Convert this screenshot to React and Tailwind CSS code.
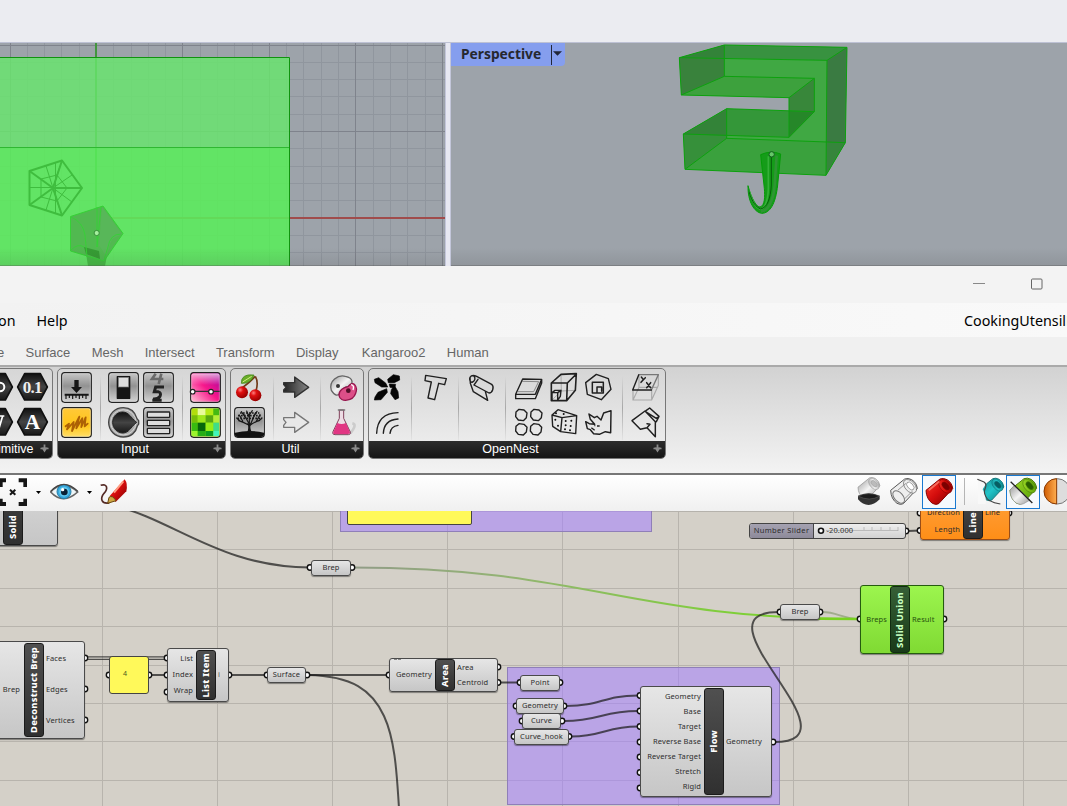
import React from "react";

const MINOR_X = [27, 44, 61, 79, 113, 131, 148, 165, 200, 217, 234, 252, 286, 303, 321, 338, 373, 390, 407, 425];
const MAJOR_X = [10, 182, 269, 355, 442];
const MINOR_Y = [62, 79, 96, 114, 148, 166, 183, 200, 235, 252];
const MAJOR_Y = [45, 131];

function TopViewport() {
  return (
    <svg className="block h-[223px] w-[445px]" viewBox="0 43 445 223">
      <defs>
        <linearGradient id="shade" x1="0" y1="0" x2="0" y2="1">
          <stop offset="0" stopColor="#222" stopOpacity="0" />
          <stop offset="1" stopColor="#333" stopOpacity="0.12" />
        </linearGradient>
      </defs>
      <rect x="0" y="43" width="445" height="223" fill="#9da3aa" />
      {MINOR_X.map((x) => <rect key={x} x={x} y="43" width="1" height="223" fill="#90969e" />)}
      {MINOR_Y.map((y) => <rect key={y} x="0" y={y} width="445" height="1" fill="#90969e" />)}
      {MAJOR_X.map((x) => <rect key={x} x={x} y="43" width="1" height="223" fill="#7f838c" />)}
      {MAJOR_Y.map((y) => <rect key={y} x="0" y={y} width="445" height="1" fill="#7f838c" />)}
      <rect x="95" y="43" width="2" height="223" fill="#43953f" />
      <rect x="96" y="217" width="349" height="2" fill="#a04c4c" />
      <rect x="0" y="57" width="289" height="90" fill="#68e66c" fillOpacity="0.82" />
      <rect x="0" y="147" width="289" height="119" fill="#5aee5b" fillOpacity="0.87" />
      <rect x="0" y="147" width="289" height="1" fill="#2fb832" />
      <path d="M0 57.5H289.5V266" fill="none" stroke="#10930f" />
      <g fill="none" stroke="#3fbd3e" strokeWidth="1.5" strokeLinejoin="round">
        <path d="M29.5 171L62 160.5L82 188L62 215.5L29.5 205Z" strokeWidth="2" />
        <path d="M29.5 171L53 188L62 160.5M53 188H82M53 188L62 215.5M53 188L29.5 205" strokeWidth="2" />
        <path d="M30 187.500H53M46 166L60 210M46 210L60 166M41 179V197L57 201L67 188L57 175ZM53 188L72 175M53 188L72 202M55.500 163V213" strokeWidth="1" />
      </g>
      <path d="M85 247L88 266H105L108 250Z" fill="#46bb45" />
      <path d="M70.500 216.500L103 206L123 233.500L104 261L70.500 251Z" fill="#51b950" stroke="#36d136" />
      <path d="M102 207L99 245L106 256L112 239L122 234Z" fill="#65b567" fillOpacity="0.4" />
      <path d="M84 247L99 251L100 259L86 254Z" fill="#369d34" />
      <path d="M71 217Q83 222 85 235L87 257M71 250Q78 243 84 247M97 207V247M101 207L97 247M121 234Q110 234 108 247L104 260" fill="none" stroke="#36d136" strokeWidth="0.9" />
      <circle cx="96.700" cy="233" r="2.600" fill="#a5ef9e" stroke="#398f3b" />
      <rect x="0" y="248" width="445" height="18" fill="url(#shade)" />
      <rect x="0" y="265" width="445" height="1" fill="#555" fillOpacity="0.35" />
    </svg>
  );
}

function PerspectiveScene() {
  return (
    <svg className="block h-[223px] w-[616px]" viewBox="451 43 616 223">
      <rect x="451" y="43" width="616" height="223" fill="#9da3aa" />
      <g transform="translate(660 35) scale(0.33333)" strokeLinejoin="round">
        <path d="M58 68L193 30L561 37L556 323L498 421L75 403L70 297L200 221L463 230L387 307L387 188L64 180Z" fill="#40a843" />
        <path d="M387 188L463 130V230L387 307Z" fill="#379638" />
        <path d="M463 130V230L387 228L387 188Z" fill="#38873a" />
        <path d="M193 124L463 130L387 188L64 180Z" fill="#3da13d" />
        <path d="M58 68L193 30V124L64 180Z" fill="#39823c" />
        <path d="M193 30L561 37L501 76L193 70Z" fill="#389240" />
        <path d="M58 68L193 30V70Z" fill="#338339" />
        <path d="M501 76L561 37L556 323L498 421Z" fill="#3a7b42" />
        <path d="M200 221L463 230L387 307L200 302Z" fill="#349739" />
        <path d="M200 221V310L75 403L70 297Z" fill="#36903a" />
        <path d="M200 221V302L70 297Z" fill="#338338" />
        <path d="M200 310L556 323L498 421L75 403Z" fill="#329734" fillOpacity="0.4" />
        <path d="M387 307L463 230L387 228Z" fill="#268729" />
        <path d="M58 68L193 30L561 37L556 323L498 421L75 403L70 297L200 221L463 230M387 188L64 180L58 68L501 76L561 37M501 76L498 421M193 30V124L463 130V230L387 307L387 188L463 130M193 124L64 180M70 297L387 307M200 221V310L75 403M200 310L556 323" fill="none" stroke="#0da10e" strokeWidth="3" />
        <path d="M302 359Q333 345 362 357L353 450C347 508 329 535 305 535C283 532 263 500 264 452C275 495 292 517 300 516C315 512 315 484 313 460Z" fill="#159c19" stroke="#059b08" strokeWidth="3" />
        <path d="M325 364V460C324 499 313 524 300 523C288 519 277 499 268 470" fill="none" stroke="#35b039" strokeWidth="5" />
        <path d="M334 361V450C332 492 321 518 302 522C289 517 277 503 267 470" fill="none" stroke="#075c0b" strokeWidth="3" />
        <path d="M350 362L344 450C341 494 325 528 303 529" fill="none" stroke="#2f9534" strokeWidth="8" />
        <circle cx="335" cy="358" r="8" fill="#66c769" stroke="#155f20" strokeWidth="3" />
      </g>
      <rect x="451" y="248" width="616" height="18" fill="url(#shade)" />
      <rect x="451" y="265" width="616" height="1" fill="#555" fillOpacity="0.35" />
    </svg>
  );
}

/* Icons are drawn on a 93-unit tile shown at 31px. */
function Icon({ at, children }) {
  return (
    <svg className="block size-[31px] shrink-0 overflow-visible" viewBox={`${at} 93 93`}>
      {children}
    </svg>
  );
}

function Tile({ x, y, fill = "url(#steel)" }) {
  return (
    <>
      <rect x={x + 2} y={y + 2} width="89" height="89" rx="9" fill={fill} stroke="#222" strokeWidth="3.500" />
      <rect x={x + 5} y={y + 5} width="83" height="83" rx="6" fill="none" stroke="#fff" strokeOpacity="0.55" strokeWidth="2" />
    </>
  );
}

function Gradients() {
  return (
    <svg className="absolute size-0">
      <defs>
        <linearGradient id="steel" x1="0" y1="0" x2="0" y2="1">
          <stop offset="0" stopColor="#c8c8c8" /><stop offset="0.45" stopColor="#929292" /><stop offset="1" stopColor="#d4d4d4" />
        </linearGradient>
        <linearGradient id="hex" x1="0" y1="0" x2="0" y2="1">
          <stop offset="0" stopColor="#111" /><stop offset="0.5" stopColor="#444" /><stop offset="1" stopColor="#181818" />
        </linearGradient>
        <linearGradient id="dark" x1="0" y1="0" x2="1" y2="0">
          <stop offset="0" stopColor="#222" /><stop offset="1" stopColor="#888" />
        </linearGradient>
        <linearGradient id="pink" x1="0" y1="1" x2="1" y2="0">
          <stop offset="0" stopColor="#ffc9d8" /><stop offset="0.5" stopColor="#f7188b" /><stop offset="1" stopColor="#a000a0" />
        </linearGradient>
        <linearGradient id="gloss" x1="0" y1="0" x2="0" y2="1">
          <stop offset="0" stopColor="#fff" stopOpacity="0.65" /><stop offset="1" stopColor="#fff" stopOpacity="0" />
        </linearGradient>
        <linearGradient id="amber" x1="0" y1="0" x2="0" y2="1">
          <stop offset="0" stopColor="#ffc83a" /><stop offset="0.6" stopColor="#ffc518" /><stop offset="1" stopColor="#ffdf6b" />
        </linearGradient>
        <linearGradient id="red" x1="0" y1="0" x2="1" y2="1">
          <stop offset="0" stopColor="#ff3b2a" /><stop offset="0.5" stopColor="#d30c0c" /><stop offset="1" stopColor="#7a0000" />
        </linearGradient>
        <linearGradient id="teal" x1="0" y1="0" x2="1" y2="1">
          <stop offset="0" stopColor="#1a8d92" /><stop offset="0.5" stopColor="#22c4c8" /><stop offset="1" stopColor="#087a80" />
        </linearGradient>
        <linearGradient id="lime" x1="0" y1="0" x2="1" y2="1">
          <stop offset="0" stopColor="#a6df2a" /><stop offset="1" stopColor="#4c9700" />
        </linearGradient>
        <linearGradient id="silver" x1="0" y1="0" x2="1" y2="1">
          <stop offset="0" stopColor="#999" /><stop offset="0.5" stopColor="#f4f4f4" /><stop offset="1" stopColor="#999" />
        </linearGradient>
        <linearGradient id="ball" x1="0" y1="0" x2="1" y2="0">
          <stop offset="0" stopColor="#cf5b00" /><stop offset="1" stopColor="#ffae50" />
        </linearGradient>
        <radialGradient id="cherry" cx="0.35" cy="0.3" r="0.7">
          <stop offset="0" stopColor="#ff8080" /><stop offset="0.35" stopColor="#e01010" /><stop offset="1" stopColor="#900" />
        </radialGradient>
      </defs>
    </svg>
  );
}

function Column({ children }) {
  return <div className="flex shrink-0 flex-col gap-1">{children}</div>;
}

function Divider() {
  return <div className="ml-2 mr-[7px] mt-1 h-[64px] w-px shrink-0 bg-gradient-to-b from-[#d8d8d8] via-[#a8a8a8] to-[#e4e4e4]" />;
}

function Panel({ title, className, titleClass = "", children }) {
  return (
    <section className={`flex h-[91px] shrink-0 flex-col overflow-hidden rounded-[5px] border border-[#777] bg-gradient-to-b from-[#d6d6d6] to-[#f0f0f0] ${className}`}>
      <div className="flex h-[72px] justify-end pl-[3px] pr-[4px] pt-[3px]">{children}</div>
      <div className="relative h-[17px] bg-gradient-to-b from-[#2d2d2d] to-[#151515] text-center text-[12.500px] leading-[17px] text-white">
        <span className={titleClass}>{title}</span>
        <svg className="absolute right-[3px] top-[3px] size-[9px]" viewBox="0 0 10 10">
          <path d="M4 0.500H6V4H8.500L5 9.500L1.500 4H4Z" fill="#8a8a8a" />
          <path d="M0.500 5H9.500" stroke="#8a8a8a" strokeWidth="1.700" />
        </svg>
      </div>
    </section>
  );
}

function Hex({ x, y }) {
  return (
    <path d={`M${x + 23} ${y + 5}H${x + 70}L${x + 91} ${y + 45}L${x + 70} ${y + 84}H${x + 23}L${x + 2} ${y + 45}Z`} fill="url(#hex)" stroke="#111" strokeWidth="5" strokeLinejoin="round" />
  );
}

const GREENS = [
  ["#b2dc0c", "#e8fa9b", "#b5ea15", "#45b912"],
  ["#77bd07", "#9de71b", "#58a612", "#b5ed39"],
  ["#38bb0f", "#07660b", "#98ee16", "#3fdd88"],
  ["#9bf42c", "#25ad16", "#0a9f20", "#42f6ba"],
];

function InputPanel() {
  return (
    <Panel title="Input" titleClass="mr-[13px]" className="ml-1 w-[169px]">
      <Column>
        <Icon at="183 21">
          <Tile x={183} y={21} />
          <path d="M223 45H236V66H246L229.500 84L213 66H223Z" fill="#151515" />
          <path d="M194 89H266" stroke="#151515" strokeWidth="6" />
          <path d="M198 90V102M208 90V99M218 90V102M228 90V99M238 90V102M248 90V99M258 90V102" stroke="#151515" strokeWidth="3.500" />
        </Icon>
        <Icon at="183 126">
          <Tile x={183} y={126} fill="url(#amber)" />
          <path d="M197 184L207 176L201 193L221 171L216 198L238 155L229 190L247 160L244 186L257 157L254 184L263 176" fill="none" stroke="#ad6105" strokeWidth="5.500" strokeLinecap="round" strokeLinejoin="round" />
        </Icon>
      </Column>
      <Divider />
      <Column>
        <Icon at="324 21">
          <Tile x={324} y={21} />
          <rect x="350" y="33" width="41" height="69" rx="2" fill="#151515" />
          <rect x="355" y="37" width="31" height="29" fill="#ddd" stroke="#777" strokeWidth="2" />
        </Icon>
        <Icon at="324 126">
          <path d="M370 128C345 128 326 147 326 172C326 197 345 216 370 216C393 216 408 202 412 183L416 177V167L411 161C405 140 390 128 370 128Z" fill="#a9a9a9" stroke="#444" strokeWidth="4" />
          <circle cx="370" cy="172" r="38" fill="none" stroke="#d4d4d4" strokeWidth="3" />
          <path d="M368 141C351 141 338 155 338 172C338 190 352 204 369 204C388 203 390 188 410 172C391 157 388 142 368 141Z" fill="url(#hex)" stroke="#222" strokeWidth="3" />
        </Icon>
      </Column>
      <div className="w-1 shrink-0" />
      <Column>
        <Icon at="429 21">
          <Tile x={429} y={21} />
          <path d="M467 26L456 42H490M484 26L476 57" fill="none" stroke="#6a6a6a" strokeWidth="8" />
          <path d="M492 66H467L463 80H474Q485 83 480 94Q474 103 459 102M457 106H485" fill="none" stroke="#222" strokeWidth="9" />
        </Icon>
        <Icon at="429 126">
          <Tile x={429} y={126} />
          {[141, 166, 190].map((y) => (
            <rect key={y} x="442" y={y} width="67" height="16" rx="2" fill="#ddd" stroke="#222" strokeWidth="4" />
          ))}
        </Icon>
      </Column>
      <Divider />
      <Column>
        <Icon at="570 21">
          <Tile x={570} y={21} fill="url(#pink)" />
          <rect x="575" y="26" width="83" height="34" rx="5" fill="url(#gloss)" />
          <path d="M573 79H659" stroke="#333" strokeWidth="4" />
          <circle cx="578" cy="80" r="7" fill="#fff" stroke="#222" strokeWidth="3.500" />
          <circle cx="633" cy="80" r="7" fill="#fff" stroke="#222" strokeWidth="3.500" />
        </Icon>
        <Icon at="570 126">
          <Tile x={570} y={126} fill="#96dd10" />
          {GREENS.map((row, r) => row.map((c, i) => (
            <rect key={`${r}-${i}`} x={[575, 593, 617, 640][i]} y={[131, 151, 173, 198][r]} width={[18, 24, 23, 17][i]} height={[20, 22, 25, 15][r]} fill={c} />
          )))}
        </Icon>
      </Column>
    </Panel>
  );
}

function UtilPanel() {
  return (
    <Panel title="Util" titleClass="mr-[13px]" className="ml-1 w-[134px]">
      <Column>
        <Icon at="27 21">
          <path d="M91 34Q71 55 51 69M91 34Q101 51 93 78" fill="none" stroke="#713b19" strokeWidth="5" />
          <circle cx="51" cy="82" r="18" fill="url(#cherry)" />
          <circle cx="91" cy="91" r="18" fill="url(#cherry)" />
          <path d="M49 55Q48 25 87 30Q79 57 49 55Z" fill="#69ad28" stroke="#397b12" strokeWidth="2" />
          <path d="M53 51L80 34" stroke="#d4f084" strokeWidth="3" />
        </Icon>
        <Icon at="27 126">
          <Tile x={27} y={126} />
          <path d="M30 203Q73 193 117 203V210Q116 216 108 216H38Q29 216 29 205Z" fill="#111" />
          <path d="M66 203Q74 185 66 175H78Q73 190 81 203Z" fill="#151515" />
          <path d="M71 180Q54 171 41 167M73 187V147M75 181Q90 170 104 166M71 174L56 147M77 177L91 144M53 168L43 150M93 170L105 149M63 160L49 140M83 161L96 139M73 158L65 138M73 150L82 137M45 168L35 159M101 168L111 159" fill="none" stroke="#151515" strokeWidth="3.500" strokeLinecap="round" />
          <path d="M37 160H111M39 152H108M45 144H103" stroke="#181818" strokeWidth="5" strokeDasharray="5 4" />
        </Icon>
      </Column>
      <Divider />
      <Column>
        <Icon at="168 21">
          <path d="M176 53H209V36L251 67L209 97V81H176V75L183 67L176 59Z" fill="url(#dark)" stroke="#333" strokeWidth="4" strokeLinejoin="round" />
        </Icon>
        <Icon at="168 126">
          <path d="M176 158H209V142L251 172L209 202V187H176V181L183 172L176 164Z" fill="#e8e8e8" stroke="#777" strokeWidth="4" strokeLinejoin="round" />
        </Icon>
      </Column>
      <Divider />
      <Column>
        <Icon at="309 21">
          <path d="M319 76C310 48 340 28 361 34C386 39 386 57 370 64Q353 67 347 83Q335 101 319 76Z" fill="url(#silver)" stroke="#666" strokeWidth="4" />
          <path d="M342 91C341 75 357 67 369 65C386 43 399 66 392 85C384 109 346 114 342 91Z" fill="#dc4f88" stroke="#96154d" strokeWidth="4" />
          <circle cx="339" cy="63" r="6" fill="#333" /><circle cx="370" cy="77" r="7" fill="#501028" />
          <path d="M378 59Q389 61 384 75" fill="none" stroke="#fff" strokeWidth="4" />
        </Icon>
        <Icon at="309 126">
          <path d="M376 205Q398 178 382 175" fill="none" stroke="#ccc" strokeWidth="8" />
          <path d="M343 135V160L323 202Q322 209 330 209H370Q378 209 376 201L356 160V135Z" fill="#eddce4" stroke="#80405b" strokeWidth="3" />
          <path d="M337 174Q350 180 363 174L375 202Q376 207 369 207H330Q323 207 325 201Z" fill="#e13683" />
          <path d="M340 135H359" stroke="#777" strokeWidth="4" strokeLinecap="round" />
        </Icon>
      </Column>
    </Panel>
  );
}

function OpenNestPanel() {
  const line = { fill: "none", stroke: "#202020", strokeWidth: 4.2, strokeLinejoin: "round", strokeLinecap: "round" };
  return (
    <Panel title="OpenNest" titleClass="mr-[13px]" className="ml-1 w-[298px]">
      <Column>
        <Icon at="441 21">
          <path d="M448 43L461 38L482 54L488 66L470 66L450 53ZM488 43L505 29L523 33L524 45L508 53H490ZM459 82L485 71L487 82L468 104L448 105L450 96ZM499 74L508 61L519 80L521 99L510 104L497 86ZM493 57L512 58L509 69L495 67Z" fill="#050505" stroke="#050505" strokeWidth="2" />
        </Icon>
        <Icon at="441 126">
          <path d="M455 205Q457 145 519 143M475 205Q477 165 519 162M495 205Q497 184 519 181" {...line} />
        </Icon>
      </Column>
      <Divider />
      <Column>
        <Icon at="582 21">
          <path d="M602 31L664 41L659 59L641 55L629 104L609 99L619 51L600 47Z" {...line} />
        </Icon>
      </Column>
      <Divider />
      <Column>
        <Icon at="48 21">
          <path d="M60 37C65 29 73 31 80 34L125 58C134 66 127 84 117 84L72 60M60 37C56 46 62 54 68 51C75 48 77 39 72 34M60 37L61 55L70 80L113 106L106 79M72 60L84 43" {...line} />
        </Icon>
      </Column>
      <Divider />
      <Column>
        <Icon at="189 21">
          <path d="M218 42L275 43L256 88H197ZM197 88V101H256L275 54V43" {...line} />
          <path d="M216 49L266 50L251 80H204" fill="none" stroke="#777" strokeWidth="2.500" />
        </Icon>
        <Icon at="189 126">
          {[[214, 150], [259, 150], [214, 193], [258, 193]].map(([x, y]) => (
            <path key={`${x}-${y}`} d={`M${x - 7} ${y - 17}L${x + 8} ${y - 15}L${x + 17} ${y - 6}L${x + 15} ${y + 8}L${x + 6} ${y + 17}L${x - 9} ${y + 15}L${x - 17} ${y + 5}L${x - 16} ${y - 9}Z`} {...line} />
          ))}
        </Icon>
      </Column>
      <div className="w-1 shrink-0" />
      <Column>
        <Icon at="294 21">
          <path d="M333 28L334 78L376 76M334 78L304 107" fill="none" stroke="#aaa" strokeWidth="3" />
          <path d="M304 54L333 28L379 26L376 76L350 107H304ZM304 54H352L379 27M352 54L350 107" {...line} strokeWidth={4.800} />
          <path d="M306 83L315 76H333L331 94L323 105M306 83H323L333 76M323 83V106M306 83V105" {...line} />
        </Icon>
        <Icon at="294 126">
          <path d="M306 150L324 134L380 152L377 206L332 200L308 184ZM306 150L336 158L380 152M336 158L332 200" {...line} />
          {[[318, 145], [341, 147], [347, 168], [364, 167], [347, 181], [362, 183], [345, 193], [360, 196], [316, 164], [324, 182]].map(([x, y]) => <circle key={`${x}-${y}`} cx={x} cy={y} r="3" fill="#111" />)}
        </Icon>
      </Column>
      <div className="w-1 shrink-0" />
      <Column>
        <Icon at="399 21">
          <path d="M407 53L439 28L475 41L483 73L454 104L412 88Z" {...line} />
          <path d="M427 52H460V84H427ZM441 66H455V79M441 66V84" {...line} strokeWidth={4.500} />
        </Icon>
        <Icon at="399 126">
          <path d="M483 137L482 203L466 200L448 208L431 206L421 194L412 191L407 170L418 176L434 178L421 163L417 147L433 158L441 154L453 165L461 144Z" {...line} strokeWidth={4.400} />
          <path d="M424 188L434 196M441 183H449M433 182H436" stroke="#222" strokeWidth="4" />
        </Icon>
      </Column>
      <Divider />
      <Column>
        <Icon at="540 21">
          <path d="M549 75V105H605L625 61V29M605 75V105M549 105L567 67H624M567 31V67" fill="none" stroke="#aaa" strokeWidth="3.500" />
          <path d="M604 75L625 29H566" {...line} stroke="#777" />
          <path d="M566 30L548 75H604" {...line} />
          <path d="M574 36L580 44L586 38M580 44L573 52M590 53L602 68M602 53L590 68" {...line} strokeWidth={4.500} />
        </Icon>
        <Icon at="540 126">
          <path d="M546 167L585 138L616 170V215L591 188L571 193ZM588 137L599 129L627 154L619 160L590 142M627 154L619 170M591 188L600 178L591 176" {...line} strokeWidth={4.400} />
        </Icon>
      </Column>
    </Panel>
  );
}

function Tube({ cx, cy, fill, hole = "#600", stroke = "#333", scale = 1 }) {
  return (
    <g transform={`translate(${cx} ${cy}) scale(${scale})`}>
      <path d="M-39 -4L3 -38Q13 -42 24 -36Q39 -27 41 -9L-1 36Q-9 41 -20 35Q-38 22 -39 -4Z" fill={fill} stroke={stroke} strokeWidth="3" strokeLinejoin="round" />
      <ellipse cx="19" cy="-16" rx="15" ry="24" transform="rotate(-42 19 -16)" fill={fill} stroke={stroke} strokeOpacity="0.7" strokeWidth="2.500" />
      <ellipse cx="20" cy="-17" rx="8" ry="14" transform="rotate(-42 20 -17)" fill={hole} stroke={stroke} strokeWidth="1.500" />
    </g>
  );
}

function Caret() {
  return <svg className="h-[5px] w-[5px]" viewBox="0 0 5 5"><path d="M0 1H5L2.500 4Z" fill="#000" /></svg>;
}

function Toolbar() {
  return (
    <div className="flex h-[38px] shrink-0 items-start justify-between overflow-hidden border-t-2 border-[#777] bg-gradient-to-b from-white to-[#f0f0f0]">
      <div className="flex h-[34px] items-center">
        <svg className="mr-[9px] h-[28px] w-[27px]" viewBox="0 29 81 84">
          <path d="M-4 36H18M56 36H76V56M76 91V107H56M18 107H2V91M2 56V36" fill="none" stroke="#161616" strokeWidth="12" />
          <path d="M30 64L46 79M46 64L30 79" stroke="#161616" strokeWidth="6" />
        </svg>
        <Caret />
        <svg className="ml-[9px] h-[20px] w-[29px]" viewBox="149 42 87 60">
          <path d="M151 72Q188 31 232 72Q188 112 151 72Z" fill="#eef6f8" stroke="#666" strokeWidth="5" />
          <circle cx="191" cy="71" r="21" fill="#35a6dc" stroke="#287fa9" strokeWidth="3" />
          <circle cx="191" cy="71" r="15" fill="#60c7ee" /><circle cx="192" cy="72" r="10" fill="#092135" /><circle cx="187" cy="65" r="5" fill="#fff" />
          <path d="M151 70Q190 28 232 70" fill="none" stroke="#444" strokeWidth="4" />
        </svg>
        <div className="ml-[8px] flex"><Caret /></div>
        <svg className="ml-[7px] h-[29px] w-[30px]" viewBox="297 33 90 87">
          <path d="M302 55C322 48 325 66 312 79C300 94 303 112 328 108" fill="none" stroke="#542a25" strokeWidth="5" />
          <path d="M329 87L374 37Q384 50 379 73L347 105Z" fill="url(#red)" />
          <path d="M342 77L370 43" stroke="#ff9c80" strokeWidth="6" />
          <path d="M327 91Q337 83 348 101L323 109Z" fill="#d0a642" stroke="#68470e" strokeWidth="3" />
        </svg>
      </div>
      <div className="flex h-[36px] w-[211px] shrink-0">
        <svg className="h-[36px] w-[66px] shrink-0" viewBox="48 21 198 108">
          <Tube cx={86} cy={61} fill="url(#silver)" hole="#bbb" stroke="#999" scale={0.82} />
          <path d="M54 84Q86 67 119 84V94Q102 111 86 111Q68 111 54 94Z" fill="#333" />
          <path d="M54 84Q86 70 119 84Q89 102 54 84" fill="#1b1b1b" stroke="#666" strokeWidth="1.500" />
          <Tube cx={191} cy={71} fill="#eee" hole="#fff" stroke="#555" />
          <ellipse cx="176" cy="87" rx="13" ry="22" transform="rotate(-42 176 87)" fill="none" stroke="#777" strokeWidth="3" />
          <path d="M174 66L198 46M192 94L218 69" stroke="#888" strokeWidth="2.500" />
        </svg>
        <svg className="h-[34px] w-[34px] shrink-0 border border-[#1878d0] bg-[#f5f9fd]" viewBox="249 24 96 96">
          <Tube cx={297} cy={71} fill="url(#red)" hole="#7b0000" stroke="#870000" />
          <path d="M268 65L296 42" stroke="#ff8c7a" strokeOpacity="0.7" strokeWidth="6" strokeLinecap="round" />
        </svg>
        <div className="ml-2 mt-[3px] h-[27px] w-px shrink-0 bg-[#b5b5b5]" />
        <svg className="ml-[9px] h-[36px] w-[32px] shrink-0" viewBox="402 21 96 108">
          <Tube cx={456} cy={65} fill="url(#teal)" hole="#075e63" stroke="#096b70" scale={0.87} />
          <path d="M414 28L440 44L428 64Q440 84 437 108H414Z" fill="#f8f8f8" />
          <path d="M412 34L432 42Q441 48 436 60Q430 72 437 85Q442 101 481 108" fill="none" stroke="#444" strokeWidth="3.500" />
        </svg>
        <svg className="h-[34px] w-[34px] shrink-0 border border-[#1878d0] bg-[#f5f9fd]" viewBox="501 24 96 96">
          <Tube cx={549} cy={70} fill="url(#lime)" hole="#295e00" stroke="#4c7a0b" />
          <path d="M523 52L570 96L551 107Q542 112 530 106Q510 93 510 66Z" fill="url(#silver)" stroke="#999" strokeWidth="2" />
          <path d="M512 41L577 105" stroke="#222" strokeWidth="4" />
        </svg>
        <svg className="ml-[3px] h-[36px] w-[25px] shrink-0" viewBox="609 21 75 108">
          <circle cx="652" cy="70" r="38" fill="#ddd" stroke="#777" strokeWidth="3" />
          <path d="M650 32A38 38 0 0 0 650 108Z" fill="url(#ball)" stroke="#883800" strokeWidth="3" />
        </svg>
      </div>
    </div>
  );
}

const V_LINES = [102, 217, 332, 447, 562, 678, 793, 908, 1023];
const H_LINES = [549, 588, 626, 665, 703, 741, 780];
const PORTS = [
  [310, 567.5], [352, 567.5], [780, 612], [820, 612], [860, 619], [944, 619],
  [85, 658], [85, 689], [85, 720], [109, 675], [149, 675], [167, 658], [167, 675], [167, 692], [229, 675],
  [267, 675], [307, 675], [389, 675], [498, 667], [498, 682.5], [520, 682.5], [560, 682.5],
  [516, 706], [564, 706], [522, 721], [562, 721], [514, 736.5], [569, 736.5],
  [640, 695.5], [640, 711], [640, 726.5], [640, 742], [640, 757], [640, 772.5], [640, 788], [773, 742],
  [906, 531], [920, 530.5], [920, 513], [1009, 513],
];

function Node({ className, tone = "border-[#4a4a4a] bg-gradient-to-b from-[#e6e6e6] to-[#c6c6c6]", children }) {
  return <div className={`absolute flex rounded-[3px] border shadow-[0_1px_1px_rgba(0,0,0,0.4)] ${tone} ${className}`}>{children}</div>;
}

function Title({ className = "items-center justify-center", tone = "border-[#1b1b1b] bg-gradient-to-b from-[#505050] to-[#303030] text-white", children }) {
  return (
    <div className={`flex w-[20px] shrink-0 rounded-[3px] border ${tone} ${className}`}>
      <span className="rotate-180 whitespace-nowrap text-[9.300px] font-extrabold leading-[16px] tracking-[0.250px] [writing-mode:vertical-rl]">{children}</span>
    </div>
  );
}

function Labels({ items, className }) {
  return (
    <div className={`flex flex-col justify-around whitespace-nowrap pb-[2px] leading-[10px] ${className}`}>
      {items.map((t) => <span key={t}>{t}</span>)}
    </div>
  );
}

function Param({ className, children }) {
  return <Node className={`items-center justify-center pb-[2px] leading-[10px] ${className}`}>{children}</Node>;
}

function Canvas() {
  return (
    <div className="relative h-[295px] shrink-0 overflow-hidden bg-[#d4d0c8] font-['Noto_Sans',sans-serif] text-[7.500px] tracking-[0.12px] text-[#2d2d2d]">
      <svg className="absolute inset-0 h-[295px] w-[1067px]" viewBox="0 511 1067 295">
        <defs>
          <linearGradient id="wire" gradientUnits="userSpaceOnUse" x1="352" y1="0" x2="860" y2="0">
            <stop offset="0" stopColor="#919c87" /><stop offset="0.3" stopColor="#93b374" /><stop offset="0.75" stopColor="#7fcf39" /><stop offset="1" stopColor="#78d220" />
          </linearGradient>
        </defs>
        {V_LINES.map((x) => <rect key={x} x={x} y="511" width="1" height="295" fill="#b8b4ad" />)}
        {H_LINES.map((y) => <rect key={y} x="0" y={y} width="1067" height="1" fill="#b8b4ad" />)}
        <rect x="0" y="511" width="1067" height="1" fill="#b5b2ac" />
        <g fill="#a47fff" fillOpacity="0.55" stroke="#8f7fb8">
          <rect x="340.500" y="500.500" width="311" height="31" />
          <rect x="507.500" y="667.500" width="272" height="137" />
        </g>
        <g fill="none" stroke="#1c1c1c" strokeOpacity="0.72" strokeWidth="2">
          <path d="M112 505C175 520 220 567 310 567.500" />
          <path d="M352 567.500C584 567.500 628 619 860 619" stroke="url(#wire)" strokeOpacity="1" />
          <path d="M822 612C838 612 842 619 860 619" stroke="#93a37e" strokeOpacity="0.8" />
          <path d="M782 617.500Q820 619 860 619" stroke="#78d220" strokeOpacity="1" strokeWidth="2.500" />
          <path d="M774 742C865 742 688 612 779 612" />
          <path d="M87 656.800H165M87 659.300H165" strokeWidth="1.200" />
          <path d="M151 675H165M231 675H267M309 675H388M500 682.500H520M908 531L920 530.500" />
          <path d="M308 675C352 676 372 690 384 716S397 780 399 808" />
          <path d="M566 706C602 706 602 695.500 638 695.500M564 721C600 721 602 711 638 711M571 736.500C603 736.500 606 726.500 638 726.500" />
        </g>
        {PORTS.map(([x, y]) => <circle key={`${x}-${y}`} cx={x} cy={y} r="2.700" fill="#fff" stroke="#111" strokeWidth="1.400" />)}
      </svg>

      <Node className="left-[-40px] top-[-80px] h-[115px] w-[98px]">
        <Title className="ml-[42px] items-end justify-center pb-[5px]"><span className="[word-spacing:2px]">Solid Intersection</span></Title>
      </Node>
      <div className="absolute left-[347px] top-[-40px] h-[54px] w-[125px] rounded-[2px] border border-[#444] bg-[#fff95a]" />
      <Param className="left-[311px] top-[49px] h-[16px] w-[40px]">Brep</Param>

      <div className="absolute left-[749px] top-[12px] flex h-[16px] w-[157px] overflow-hidden rounded-[3px] border border-[#444] bg-gradient-to-b from-[#eee] to-[#d2d2d2] leading-[13px]">
        <div className="w-[64px] border-r border-[#444] bg-gradient-to-b from-[#a5a2b1] to-[#8d8a9a] text-center tracking-[0.35px]">Number Slider</div>
        <svg className="h-[14px] w-[91px]" viewBox="814 524 91 14">
          <path d="M826 530.500H898M864 527V530M872 527V530M881 527V530M890 527V530M898 527V531" stroke="#aaa" strokeWidth="0.700" />
          <circle cx="821" cy="530.800" r="2.500" fill="#fff" stroke="#111" strokeWidth="1.600" />
          <text x="826.500" y="533.300" fontSize="7.500" fill="#333">-20.000</text>
        </svg>
      </div>

      <Node className="left-[920px] top-[-26px] h-[55px] w-[90px]" tone="border-[#9a4d17] bg-gradient-to-b from-[#ffa43d] to-[#ff8e16]">
        <Labels className="w-[42px] items-end pr-[3px]" items={["Start", "Direction", "Length"]} />
        <Title className="items-end justify-center pb-[5px]">Line</Title>
        <Labels className="pl-[2px]" items={["Line"]} />
      </Node>

      <Param className="left-[780px] top-[93px] h-[16px] w-[40px]">Brep</Param>
      <Node className="left-[860px] top-[74px] h-[69px] w-[84px]" tone="border-[#255c0f] bg-gradient-to-b from-[#9cf54e] to-[#80da33] text-[#26520f]">
        <Labels className="w-[29px] items-end pr-[3px]" items={["Breps"]} />
        <Title tone="border-[#122c12] bg-gradient-to-b from-[#365f36] to-[#193b19] text-[#c7ffc0]">Solid Union</Title>
        <Labels className="pl-[2px]" items={["Result"]} />
      </Node>

      <Node className="left-[-30px] top-[130px] h-[98px] w-[115px] py-px">
        <Labels className="w-[53px] items-end pr-[4px]" items={["Brep"]} />
        <Title>Deconstruct Brep</Title>
        <Labels className="pl-[2px]" items={["Faces", "Edges", "Vertices"]} />
      </Node>
      <div className="absolute left-[109px] top-[145px] flex h-[38px] w-[40px] items-center rounded-[3px] border border-[#444] bg-[#fff95a] pb-[2px] pl-[13px] text-[7px] text-[#4d5a20]">4</div>
      <Node className="left-[167px] top-[137px] h-[54px] w-[62px] py-px">
        <Labels className="w-[28px] items-end pr-[3px]" items={["List", "Index", "Wrap"]} />
        <Title>List Item</Title>
        <Labels className="pl-[2px] text-[#555]" items={["i"]} />
      </Node>
      <Param className="left-[267px] top-[156px] h-[16px] w-[39px]">Surface</Param>

      <Node className="left-[389px] top-[147px] h-[34px] w-[109px]">
        <Labels className="w-[45px] items-end pr-[3px]" items={["Geometry"]} />
        <Title>Area</Title>
        <Labels className="pl-[2px]" items={["Area", "Centroid"]} />
        <svg className="absolute left-[4px] top-0 h-px w-[7px]" viewBox="0 0 7 1"><path d="M0 .5H3M4 .5H7" stroke="#888" /></svg>
      </Node>

      <Param className="left-[520px] top-[164px] h-[16px] w-[40px]">Point</Param>
      <Param className="left-[516px] top-[187px] h-[16px] w-[48px]">Geometry</Param>
      <Param className="left-[522px] top-[202px] h-[16px] w-[39px]">Curve</Param>
      <Param className="left-[514px] top-[218px] h-[16px] w-[55px]">Curve_hook</Param>

      <Node className="left-[640px] top-[175px] h-[111px] w-[132px] py-px">
        <Labels className="w-[63px] items-end pr-[3px]" items={["Geometry", "Base", "Target", "Reverse Base", "Reverse Target", "Stretch", "Rigid"]} />
        <Title>Flow</Title>
        <Labels className="pl-[2px]" items={["Geometry"]} />
      </Node>
    </div>
  );
}

export default function App() {
  return (
    <div className="flex h-[806px] w-[1067px] flex-col overflow-hidden bg-[#f0f0f0] font-['Liberation_Sans',sans-serif]">
      <Gradients />
      <div className="h-[43px] shrink-0 border-b border-[#bdc1d4] bg-[#ebecf1]" />
      <div className="flex h-[223px] shrink-0 bg-[#e7e8f2]">
        <TopViewport />
        <div className="w-[6px] shrink-0 border-x border-[#c3c6da]" />
        <div className="relative w-[616px]">
          <PerspectiveScene />
          <div className="absolute left-0 top-0 flex h-[23px] w-[114px] rounded-br-[4px] bg-[#859eee] font-['Noto_Sans',sans-serif] text-[13.800px] font-bold leading-[22px] text-[#26282f]">
            <span className="w-[100px] pl-[10px]">Perspective</span>
            <span className="mt-[2px] h-[20px] w-px bg-[#222638]" />
            <svg className="ml-px mt-[8px] h-[5px] w-[9px]" viewBox="0 0 10 5"><path d="M0 0H10L5 5Z" fill="#222638" /></svg>
          </div>
        </div>
      </div>

      <div className="flex h-[37px] shrink-0 items-start justify-end bg-[#f3f3f3] pt-[12px]">
        <svg className="h-[12px] w-[94px]" viewBox="973 278 94 12">
          <path d="M973 283.500H985" stroke="#888" />
          <rect x="1031.500" y="279" width="10.500" height="10" rx="1" fill="none" stroke="#666" />
        </svg>
      </div>
      <div className="flex h-[34px] shrink-0 items-center justify-between overflow-hidden bg-gradient-to-r from-[#f2f2f2] to-[#f9f9f9] pt-[2px] font-['Noto_Sans',sans-serif] text-[14.300px] text-black">
        <div className="flex gap-[21px]"><span className="ml-[-2px]">on</span><span>Help</span></div>
        <div className="w-[103px] whitespace-nowrap">CookingUtensilHolder</div>
      </div>
      <div className="flex h-[28px] shrink-0 items-center gap-[21.300px] pt-[4px] text-[13px] text-[#666]">
        <span className="ml-[-3px]">e</span>
        <span>Surface</span><span>Mesh</span><span>Intersect</span><span>Transform</span><span>Display</span><span className="ml-[2px]">Kangaroo2</span><span>Human</span>
      </div>
      <div className="flex h-[108px] shrink-0 items-start border-t-2 border-[#aaa] bg-gradient-to-b from-[#d2d2d2] to-[#f3f3f3] pt-px">
        <Panel title="Primitive" titleClass="mr-[18px] inline-block -ml-[15px]" className="w-[53px] rounded-l-none border-l-0">
          <Column>
            <Icon at="-54 21"><Hex x={-54} y={21} /><circle cx="0" cy="66" r="13" fill="none" stroke="#fff" strokeWidth="6" /></Icon>
            <Icon at="-54 126"><Hex x={-54} y={126} /><path d="M-12 153H13M-3 190L8 153" stroke="#fff" strokeWidth="5" /></Icon>
          </Column>
          <div className="w-1 shrink-0" />
          <Column>
            <Icon at="51 21"><Hex x={51} y={21} /><text x="97" y="83" textAnchor="middle" fill="#eee" className="font-['Liberation_Serif',serif] text-[51px] font-bold tracking-[-2px]">0.1</text></Icon>
            <Icon at="51 126"><Hex x={51} y={126} /><text x="97" y="191" textAnchor="middle" fill="#fff" className="font-['Liberation_Serif',serif] text-[64px] font-bold">A</text></Icon>
          </Column>
        </Panel>
        <InputPanel />
        <UtilPanel />
        <OpenNestPanel />
      </div>
      <Toolbar />
      <Canvas />
    </div>
  );
}
